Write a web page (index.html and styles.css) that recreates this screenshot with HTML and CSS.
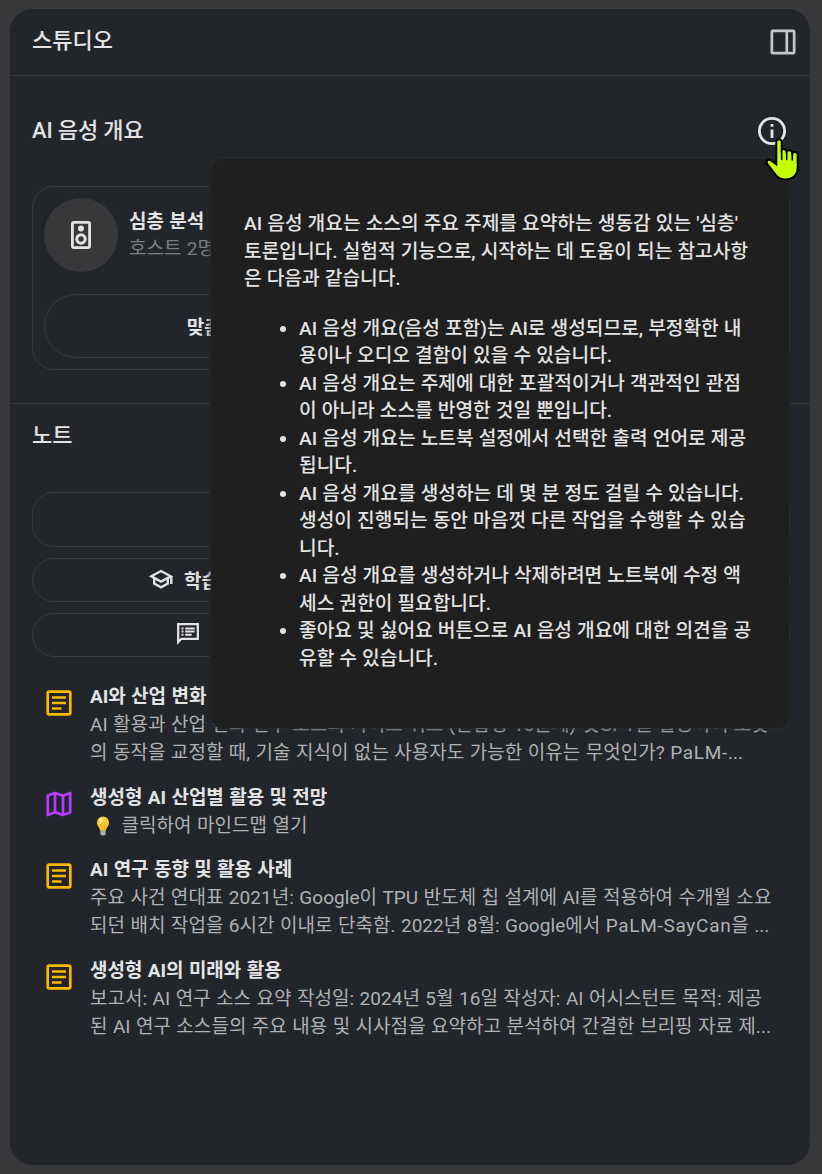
FILE: index.html
```
<!DOCTYPE html>
<html lang="ko">

<head>
  <meta charset="UTF-8">
  <title>스튜디오</title>
  <link rel="stylesheet" href="styles.css">
</head>
<body>
  <div class="panel">
    <header class="panel-header">
      <h1>스튜디오</h1>
      <svg class="icon-panel" viewBox="0 0 26 26" width="26" height="26" fill="none" stroke="#c4c7c5" stroke-width="2.7">
        <rect x="1.85" y="1.85" width="22.3" height="22.3" rx="1"/>
        <path d="M16.8 2v22"/>
      </svg>
    </header>

    <section class="audio">
      <div class="section-title">
        <h2>AI 음성 개요</h2>
        <svg class="icon-info" viewBox="0 0 28 28" width="28" height="28">
          <circle cx="14" cy="14" r="12.6" fill="none" stroke="#e3e3e3" stroke-width="2.8"/>
          <path d="M12.6 7h2.8v2.8h-2.8zM12.6 12.4h2.8v8.6h-2.8z" fill="#e3e3e3"/>
        </svg>
      </div>
      <div class="card">
        <div class="host">
          <div class="avatar">
            <svg viewBox="0 0 20 28" width="20" height="28">
              <rect x="1.4" y="1.4" width="17.2" height="25.2" rx="1.5" fill="none" stroke="#e3e3e3" stroke-width="2.8"/>
              <circle cx="10" cy="7.4" r="3" fill="#e3e3e3"/>
              <circle cx="10" cy="18" r="4.2" fill="none" stroke="#e3e3e3" stroke-width="3"/>
            </svg>
          </div>
          <div>
            <div class="host-name">심층 분석</div>
            <div class="host-sub">호스트 2명</div>
          </div>
        </div>
        <div class="card-buttons">
          <button class="pill">맞춤설정</button>
          <button class="pill"></button>
        </div>
      </div>
    </section>

    <section class="notes">
      <h2>노트</h2>
      <div class="note-buttons">
        <button class="wide"></button>
        <button>
          <svg viewBox="0 0 24 20" width="24" height="20" fill="none" stroke="#e3e3e3" stroke-width="2.4">
            <path d="M2.3 7.3L12 2l9.7 5.300L12 12.600z"/>
            <path d="M5.200 9.200v5.400L12 18.300l6.800-3.700V9.200M22.300 7v8"/>
          </svg>
          학습 가이드
        </button>
        <button></button>
        <button class="faq">
          <svg viewBox="0 0 22 22" width="22" height="22">
            <path d="M1.200 19V1.200h19.600v14.600H4.400z" fill="none" stroke="#e3e3e3" stroke-width="2.300"/>
            <path d="M.1 16v5.800L5 16z" fill="#e3e3e3"/>
            <path d="M4.500 4.400h2v2h-2zM4.500 7.600h2v2h-2zM4.500 10.800h2v2h-2zM8.200 4.400h9.500v2H8.200zM8.200 7.600h9.500v2H8.200zM8.200 10.800h6.500v2H8.200z" fill="#e3e3e3"/>
          </svg>
          FAQ
        </button>
        <button></button>
      </div>

      <ul class="note-list">
        <li>
          <svg class="note-icon" viewBox="0 0 26 26" width="26" height="26" fill="none" stroke="#fbb803" stroke-width="2.7">
            <rect x="1.7" y="1.7" width="22.600" height="22.600" rx="1.500"/>
            <path d="M6 7.500h14M6 13h14M6 18.500h9.500"/>
          </svg>
          <div>
            <h3>AI와 산업 변화</h3>
            <p>AI 활용과 산업 변화 연구 소스의 가이드 퀴즈 (단답형 10문제) 챗GPT를 활용하여 로봇<br>의 동작을 교정할 때, 기술 지식이 없는 사용자도 가능한 이유는 무엇인가? <span class="latin">PaLM-</span>...</p>
          </div>
        </li>
        <li>
          <svg class="note-icon" viewBox="0 0 26 26" width="26" height="26" fill="none" stroke="#b73cff" stroke-width="2.7" stroke-linejoin="round">
            <path d="M1.800 4.500L9 1.900l8 2.800 7.200-2.800v19.600L17 24.100l-8-2.800-7.200 2.800zM9 2v19.300M17 4.700V24"/>
          </svg>
          <div>
            <h3>생성형 AI 산업별 활용 및 전망</h3>
            <p class="mindmap">
              <svg class="bulb" viewBox="0 0 14 20" width="14" height="20">
                <path d="M7 .500a6 6 0 0 0-6 6.200c0 3.300 2.800 4.500 3.200 8.100h5.600c.4-3.600 3.200-4.800 3.200-8.100A6 6 0 0 0 7 .500z" fill="#fdc72f"/>
                <path d="M5.300 14V9.500L4.600 8M8.700 14V9.500L9.400 8" stroke="#f19a20" stroke-width=".7" fill="none"/>
                <ellipse cx="5" cy="4.500" rx="2" ry="2.600" fill="#fff09a"/>
                <path d="M4.300 14.800h5.400v3.400L8.300 19.600H5.700l-1.400-1.400z" fill="#a9b0b4"/>
              </svg>
              클릭하여 마인드맵 열기
            </p>
          </div>
        </li>
        <li>
          <svg class="note-icon" viewBox="0 0 26 26" width="26" height="26" fill="none" stroke="#fbb803" stroke-width="2.7">
            <rect x="1.7" y="1.7" width="22.600" height="22.600" rx="1.500"/>
            <path d="M6 7.500h14M6 13h14M6 18.500h9.500"/>
          </svg>
          <div>
            <h3>AI 연구 동향 및 활용 사례</h3>
            <p>주요 사건 연대표 2021년: Google이 TPU 반도체 칩 설계에 AI를 적용하여 수개월 소요<br>되던 배치 작업을 6시간 이내로 단축함. 2022년 8월: Google에서 <span class="latin">PaLM-SayCan</span>을 ...</p>
          </div>
        </li>
        <li>
          <svg class="note-icon" viewBox="0 0 26 26" width="26" height="26" fill="none" stroke="#fbb803" stroke-width="2.7">
            <rect x="1.7" y="1.7" width="22.600" height="22.600" rx="1.500"/>
            <path d="M6 7.500h14M6 13h14M6 18.500h9.500"/>
          </svg>
          <div>
            <h3>생성형 AI의 미래와 활용</h3>
            <p>보고서: AI 연구 소스 요약 작성일: 2024년 5월 16일 작성자: AI 어시스턴트 목적: 제공<br>된 AI 연구 소스들의 주요 내용 및 시사점을 요약하고 분석하여 간결한 브리핑 자료 제...</p>
          </div>
        </li>
      </ul>
    </section>
  </div>

  <div class="tooltip">
    <p>AI 음성 개요는 소스의 주요 주제를 요약하는 생동감 있는 '심층'<br>토론입니다. 실험적 기능으로, 시작하는 데 도움이 되는 참고사항<br>은 다음과 같습니다.</p>
    <ul>
      <li>AI 음성 개요(음성 포함)는 AI로 생성되므로, 부정확한 내<br>용이나 오디오 결함이 있을 수 있습니다.</li>
      <li>AI 음성 개요는 주제에 대한 포괄적이거나 객관적인 관점<br>이 아니라 소스를 반영한 것일 뿐입니다.</li>
      <li>AI 음성 개요는 노트북 설정에서 선택한 출력 언어로 제공<br>됩니다.</li>
      <li>AI 음성 개요를 생성하는 데 몇 분 정도 걸릴 수 있습니다.<br>생성이 진행되는 동안 마음껏 다른 작업을 수행할 수 있습<br>니다.</li>
      <li>AI 음성 개요를 생성하거나 삭제하려면 노트북에 수정 액<br>세스 권한이 필요합니다.</li>
      <li>좋아요 및 싫어요 버튼으로 AI 음성 개요에 대한 의견을 공<br>유할 수 있습니다.</li>
    </ul>
  </div>

  <svg class="cursor" viewBox="0 0 34 44" width="34" height="44">
    <path d="M14 2.200c-1.700 0-2.700 1.100-2.700 2.800v22.300l-5.200-3.800c-1.300-1-3-.9-3.900.2-.9 1.100-.7 2.300.2 3.400l8.200 10.800c2.300 3 5.700 4.600 9.900 4.600 7.300 0 12.200-4.500 12.200-12V17.500c0-1.500-1-2.600-2.600-2.600-1.300 0-2.300.6-2.800 1.300-.2-1.900-1.300-3-2.900-3s-2.400.7-2.900 1.500c-.4-1.800-1.400-2.600-2.800-2.600-.9 0-1.600.3-2 .8V5c0-1.700-1-2.800-2.700-2.800z" fill="#c3ff00" stroke="#000" stroke-width="2"/>
    <path d="M16.700 12v10.500M21.700 14.500v8M27.300 16v7" stroke="#000" stroke-width="1.600" fill="none" stroke-linecap="round"/>
  </svg>
</body>
</html>
```
FILE: styles.css
```
* {
  box-sizing: border-box;
}

body {
  margin: 0;
  padding: 9px 12px 9px 10px;
  height: 1174px;
  overflow: hidden;
  background-color: #38383b;
  color: #e3e3e3;
  font-family: Roboto, "Noto Sans CJK KR", sans-serif;
  font-size: 19px;
  word-spacing: 0.6px;
}

h1, h2, h3, p, ul {
  margin: 0;
  padding: 0;
}

svg {
  display: block;
  flex: none;
}

.panel {
  height: 1156px;
  background-color: #22262b;
  border-radius: 22px;
}

.panel-header {
  display: flex;
  justify-content: space-between;
  align-items: center;
  height: 67px;
  padding: 0 14.5px 0 22px;
  border-bottom: 1px solid #37393b;
}

h1, h2 {
  font-size: 22px;
  font-weight: 500;
  line-height: 30px;
  word-spacing: -0.5px;
}

h1 {
  padding-bottom: 2px;
}

.audio {
  height: 328px;
  padding: 40px 20px 0 22px;
  border-bottom: 1px solid #37393b;
}

.section-title {
  display: flex;
  justify-content: space-between;
  align-items: center;
  padding-right: 4.5px;
}

.card {
  height: 184px;
  margin-top: 40px;
  padding: 11px;
  border: 1px solid #37393b;
  border-radius: 22px;
}

.host {
  display: flex;
  align-items: center;
  gap: 11px;
}

.avatar {
  display: flex;
  align-items: center;
  justify-content: center;
  width: 74px;
  height: 74px;
  border-radius: 50%;
  background-color: #38383b;
}

.host-name {
  font-weight: 700;
  line-height: 27px;
}

.host-sub {
  color: #7c7e80;
  line-height: 27px;
}

.card-buttons {
  display: grid;
  grid-template-columns: 1fr 1fr;
  gap: 11px;
  margin-top: 22px;
}

button {
  display: flex;
  align-items: center;
  justify-content: center;
  gap: 11px;
  height: 44px;
  padding: 0 12px 2px 0;
  border: 1px solid #37393b;
  border-radius: 22px;
  background: none;
  color: #e3e3e3;
  font-family: inherit;
  font-size: 19px;
  font-weight: 700;
}

.faq {
  padding-right: 15px;
}

.pill {
  height: 64px;
  padding-right: 6px;
  border-radius: 32px;
}

.notes {
  padding: 17px 20px 0 22px;
}

.note-buttons {
  display: grid;
  grid-template-columns: 1fr 1fr;
  gap: 11px 12px;
  margin-top: 41px;
}

.note-buttons .wide {
  grid-column: 1 / 3;
  height: 55px;
}

.note-list {
  list-style: none;
  margin-top: 26px;
}

.note-list li {
  display: flex;
  gap: 18px;
  padding-left: 14px;
  margin-bottom: 16.5px;
  white-space: nowrap;
}

.note-icon {
  margin-top: 7px;
}

h3 {
  font-size: 19px;
  font-weight: 700;
  line-height: 28px;
}

.note-list p {
  color: #afb1b2;
  line-height: 28px;
  letter-spacing: 0.05px;
}

.latin {
  letter-spacing: 0.7px;
}

.note-list .mindmap {
  display: flex;
  align-items: center;
  gap: 12px;
  padding-left: 5.5px;
}

/* info popup over the panel */
.tooltip {
  position: absolute;
  left: 211px;
  top: 159px;
  width: 578px;
  height: 569px;
  padding: 51.3px 33px;
  border-radius: 11px;
  background-color: #1f1f1f;
  box-shadow: 0 0 4px 1px #282c30;
  font-size: 19.2px;
  font-weight: 500;
  line-height: 27.5px;
  white-space: nowrap;
  word-spacing: 0.3px;
}

.tooltip ul {
  margin-top: 22px;
  padding-left: 55px;
}

.cursor {
  position: absolute;
  left: 765px;
  top: 137px;
}
```
